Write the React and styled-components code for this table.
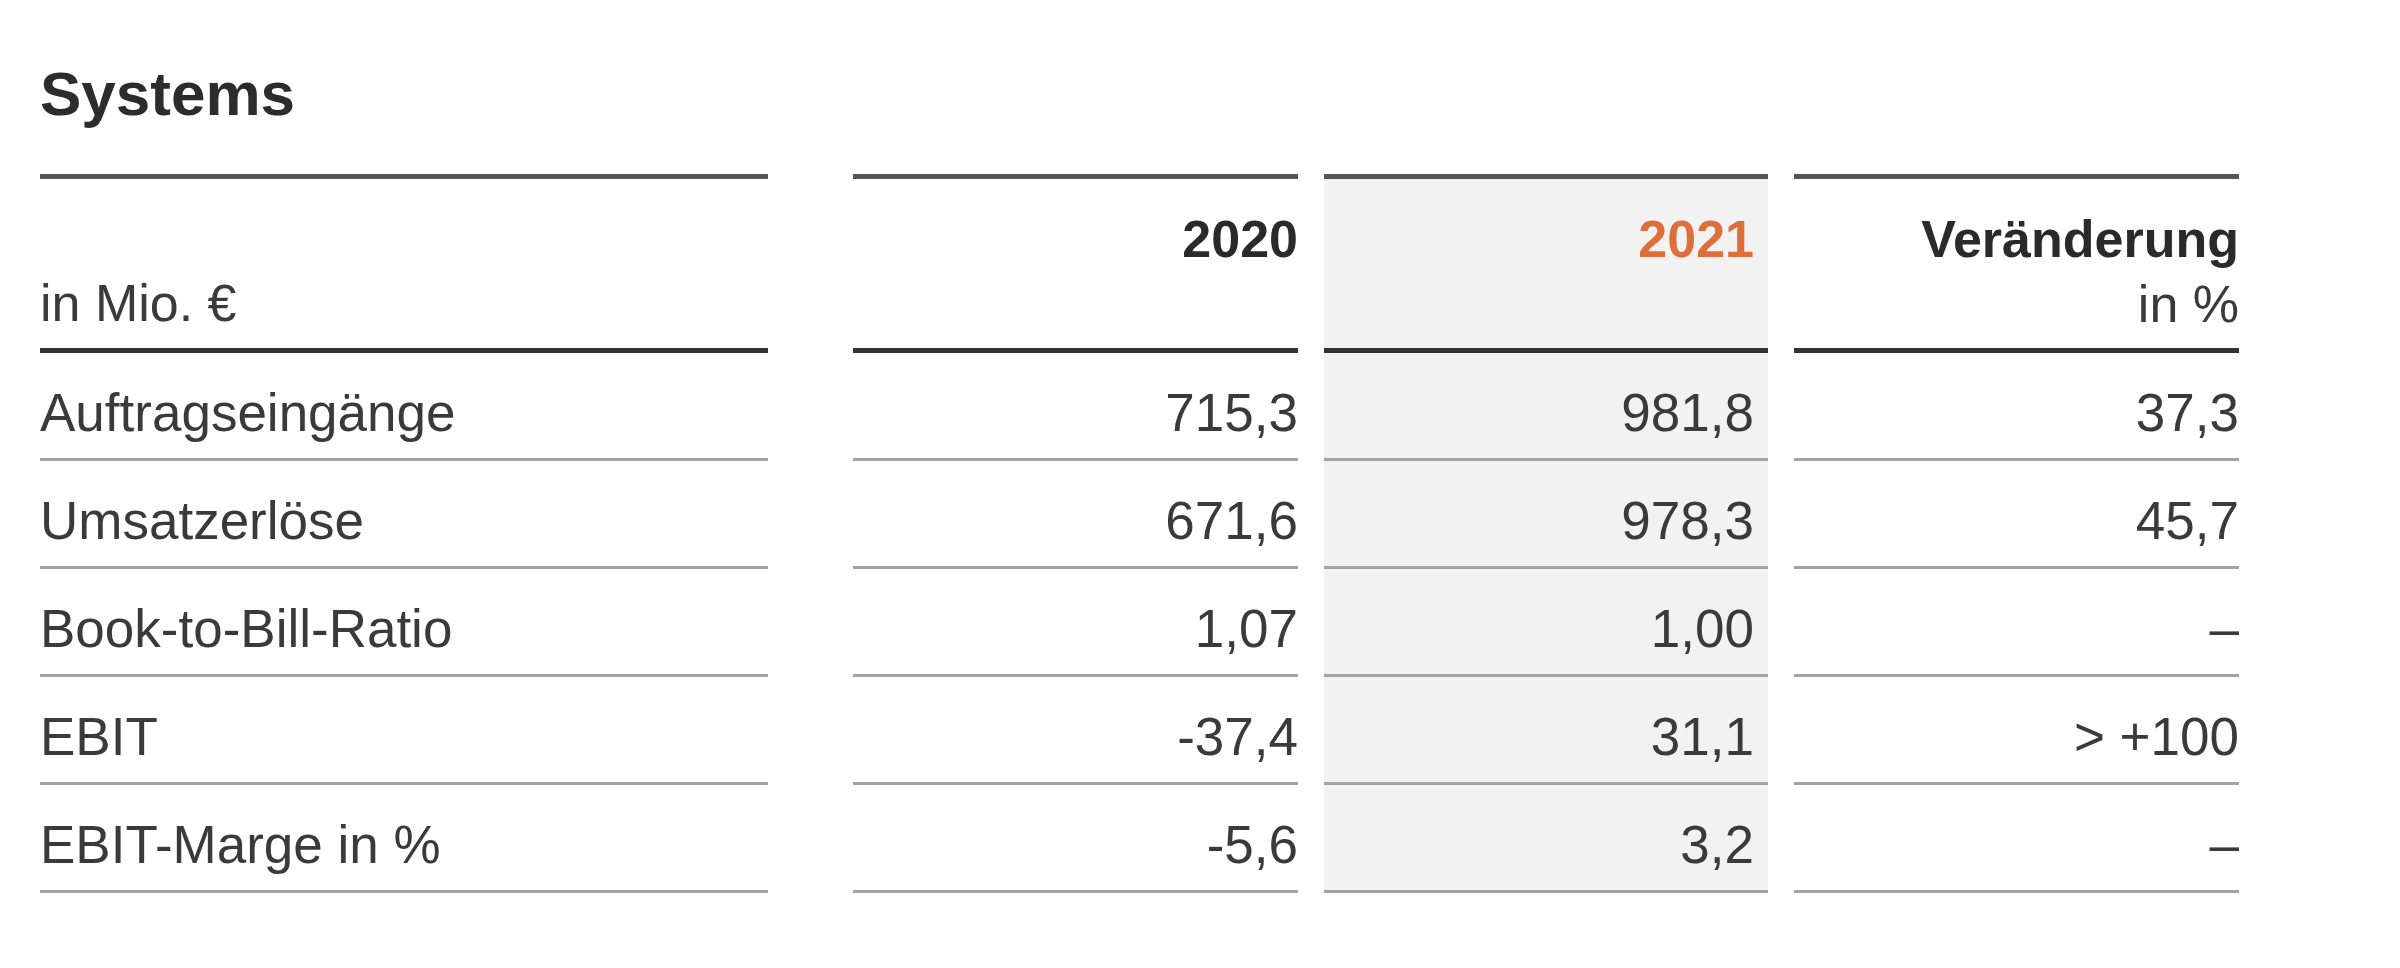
import styled, { createGlobalStyle } from "styled-components";

const GlobalStyle = createGlobalStyle`
  html, body {
    margin: 0;
    padding: 0;
    background: #ffffff;
  }
  body {
    font-family: "Liberation Sans", Arial, sans-serif;
  }
`

const rows = [
    { label: "Auftragseingänge", a: "715,3", b: "981,8", change: "37,3" },
    { label: "Umsatzerlöse", a: "671,6", b: "978,3", change: "45,7" },
    { label: "Book-to-Bill-Ratio", a: "1,07", b: "1,00", change: "–" },
    { label: "EBIT", a: "-37,4", b: "31,1", change: "> +100" },
    { label: "EBIT-Marge in %", a: "-5,6", b: "3,2", change: "–" },
]

const App = () => {
    return (
        <Wrapper>
            <GlobalStyle />
            <Title>Systems</Title>
            <Table>
                <HeadCell $align="left" $bottom $gap={59}>in Mio. €</HeadCell>
                <HeadCell><Bold>2020</Bold></HeadCell>
                <HeadCell $shade $pad={14}><Bold $accent>2021</Bold></HeadCell>
                <HeadCell>
                    <Bold>Veränderung</Bold>
                    <span>in %</span>
                </HeadCell>

                {rows.map(row => (
                    <Row key={row.label}>
                        <Cell $align="left" $gap={59}>{row.label}</Cell>
                        <Cell>{row.a}</Cell>
                        <Cell $shade $pad={14}>{row.b}</Cell>
                        <Cell>{row.change}</Cell>
                    </Row>
                ))}
            </Table>
        </Wrapper>
    )
}

const Wrapper = styled.div`
    box-sizing: border-box;
    width: 2400px;
    min-height: 968px;
    padding: 0 0 0 40px;
    background: #ffffff;
`

const Title = styled.h2`
    margin: 0 0 44px;
    padding-top: 58px;
    font-size: 62px;
    line-height: 72px;
    font-weight: 700;
    color: #2c2c2c;
`

const Table = styled.div`
    display: grid;
    grid-template-columns: 787px 445px 444px 445px;
    column-gap: 26px;
`

const Row = styled.div`
    display: contents;
`

const HeadCell = styled.div`
    box-sizing: border-box;
    height: 179px;
    padding: ${props => props.$bottom ? '0 0 12px' : '28px 0 0'};
    padding-right: ${props => props.$pad || 0}px;
    margin-right: ${props => props.$gap || 0}px;
    border-top: 5px solid #555555;
    border-bottom: 5px solid #333333;
    background: ${props => props.$shade ? '#f2f2f2' : 'transparent'};

    display: flex;
    flex-direction: column;
    justify-content: ${props => props.$bottom ? 'flex-end' : 'flex-start'};
    align-items: ${props => props.$align === 'left' ? 'flex-start' : 'flex-end'};

    font-size: 52px;
    line-height: 65px;
    color: #3a3a3a;
`

const Bold = styled.span`
    font-weight: 700;
    color: ${props => props.$accent ? '#de6f3b' : '#2a2a2a'};
`

const Cell = styled.div`
    box-sizing: border-box;
    height: 108px;
    padding-top: 29px;
    padding-right: ${props => props.$pad || 0}px;
    margin-right: ${props => props.$gap || 0}px;
    border-bottom: 3px solid #a3a3a3;
    background: ${props => props.$shade ? '#f2f2f2' : 'transparent'};

    text-align: ${props => props.$align || 'right'};
    font-size: 53px;
    line-height: 61px;
    color: #3a3a3a;
    white-space: nowrap;
`

export default App;
